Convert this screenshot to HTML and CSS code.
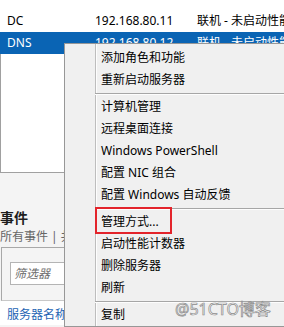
FILE: index.html
```html
<!DOCTYPE html>
<html lang="zh-CN">
<head>
<meta charset="utf-8">
<link rel="stylesheet" href="styles.css">
</head>
<body>
<div class="app">
  <div class="list">
    <div class="row"><span class="c1">DC</span><span class="c2">192.168.80.11</span><span class="c3">联机 - 未启动性能计数器</span></div>
    <div class="row sel"><span class="c1">DNS</span><span class="c2">192.168.80.12</span><span class="c3">联机 - 未启动性能计数器</span></div>
  </div>
  <div class="pane"></div>
  <div class="events">
    <div class="ev-title">事件</div>
    <div class="ev-sub">所有事件 | 共 0 个</div>
    <div class="filterbox"><div class="filter">筛选器</div></div>
    <div class="colhead">服务器名称</div>
  </div>
</div>

<div class="menu">
  <div class="item">添加角色和功能</div>
  <div class="item">重新启动服务器</div>
  <div class="sep"></div>
  <div class="item">计算机管理</div>
  <div class="item">远程桌面连接</div>
  <div class="item">Windows PowerShell</div>
  <div class="item">配置 NIC 组合</div>
  <div class="item">配置 Windows 自动反馈</div>
  <div class="sep"></div>
  <div class="item marked">管理方式...<span class="redbox"></span></div>
  <div class="item">启动性能计数器</div>
  <div class="item">删除服务器</div>
  <div class="item">刷新</div>
  <div class="sep"></div>
  <div class="item">复制</div>
</div>

<div class="watermark">@51CTO博客</div>
</body>
</html>
```

FILE: styles.css
```css
html, body {
  margin: 0;
  padding: 0;
}
body {
  width: 284px;
  height: 327px;
  overflow: hidden;
  position: relative;
  background: #ffffff;
  font-family: "Noto Sans", "Noto Sans CJK SC", sans-serif;
  font-size: 12px;
  color: #000;
}
.app {
  display: flex;
  flex-direction: column;
  width: 284px;
  height: 327px;
}
.list {
  padding-top: 10px;
  background: #fff;
}
.row {
  display: flex;
  height: 22px;
  line-height: 22px;
  white-space: nowrap;
  overflow: hidden;
}
.row.sel {
  background: #0a64b4;
  color: #fff;
}
.c1 {
  width: 88px;
  padding-left: 7px;
  flex: none;
}
.c2 {
  width: 102px;
  flex: none;
}
.c3 {
  flex: none;
}
.pane {
  height: 118px;
  border-left: 1px solid #a0a0a0;
  border-bottom: 1px solid #a0a0a0;
  width: 63px;
  background: #fff;
}
.events {
  flex: 1;
  background: #f4f4f4;
  padding-top: 36px;
}
.ev-title {
  font-size: 14px;
  font-weight: bold;
  line-height: 18px;
  color: #1e1e1e;
}
.ev-sub {
  line-height: 20px;
  color: #666;
  white-space: nowrap;
}
.filterbox {
  margin-left: 1px;
  border-left: 1px solid #a8a8a8;
  border-top: 1px solid #a8a8a8;
  border-bottom: 1px solid #c8c8c8;
  padding: 14px 0 15px 8px;
}
.filter {
  height: 21px;
  line-height: 21px;
  border: 1px solid #b4b4b4;
  background: #fff;
  padding-left: 3px;
  color: #6e6e6e;
  font-style: italic;
}
.colhead {
  padding: 4px 0 0 7px;
  line-height: 20px;
  color: #2464b4;
  background: #fff;
  flex: 1;
}
.menu {
  position: absolute;
  left: 64px;
  top: 43px;
  width: 240px;
  padding-top: 3px;
  border: 1px solid #979797;
  background: linear-gradient(to right, #f0f0f0 30px, #bdbdbd 30px, #bdbdbd 31px, #fdfdfd 31px, #fdfdfd 32px, #f0f0f0 32px);
}
.item {
  position: relative;
  height: 22px;
  line-height: 22px;
  padding-left: 36px;
  white-space: nowrap;
  color: #000;
}
.sep {
  height: 1px;
  margin: 2px 0 1px 30px;
  background: #a6a6a6;
  border-bottom: 1px solid #fdfdfd;
}
.redbox {
  position: absolute;
  left: 30px;
  top: -4px;
  width: 73px;
  height: 23px;
  border: 2px solid #e3242b;
}
.watermark {
  position: absolute;
  left: 175px;
  top: 298px;
  font-size: 16px;
  line-height: 22px;
  color: #ffffff;
  -webkit-text-stroke: 0.7px #8a8a8a;
  white-space: nowrap;
}
```
